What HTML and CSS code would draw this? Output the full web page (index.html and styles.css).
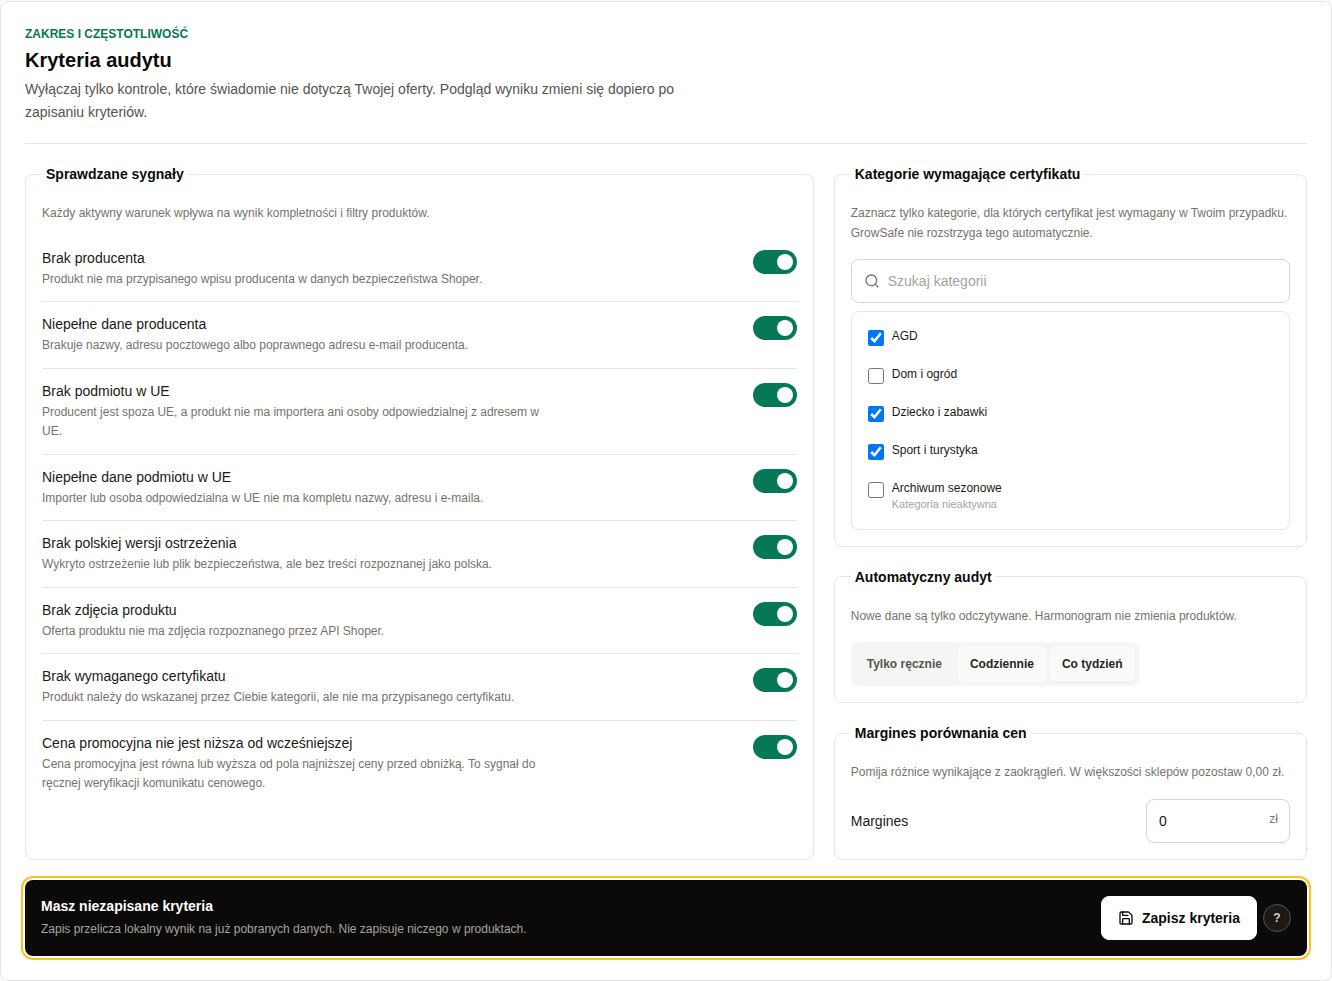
FILE: index.html
```html
<!DOCTYPE html>
<html lang="pl">
    <head>
        <meta charset="utf-8">
        <title>Kryteria audytu</title>
        <link rel="stylesheet" href="styles.css">
    </head>
    <body>
        <form class="card">
            <header class="card_header">
                <p class="eyebrow">ZAKRES I CZĘSTOTLIWOŚĆ</p>
                <h2>Kryteria audytu</h2>
                <p class="lead">Wyłączaj tylko kontrole, które świadomie nie dotyczą Twojej oferty. Podgląd wyniku zmieni się dopiero po zapisaniu kryteriów.</p>
            </header>

            <div class="columns">
                <fieldset class="signals">
                    <legend>Sprawdzane sygnały</legend>
                    <p class="hint">Każdy aktywny warunek wpływa na wynik kompletności i filtry produktów.</p>
                    <div class="signal_list">
                        <label class="signal">
                            <span class="signal_text">
                                <span class="signal_name">Brak producenta</span>
                                <span class="signal_desc">Produkt nie ma przypisanego wpisu producenta w danych bezpieczeństwa Shoper.</span>
                            </span>
                            <input type="checkbox" class="switch" checked>
                        </label>
                        <label class="signal">
                            <span class="signal_text">
                                <span class="signal_name">Niepełne dane producenta</span>
                                <span class="signal_desc">Brakuje nazwy, adresu pocztowego albo poprawnego adresu e-mail producenta.</span>
                            </span>
                            <input type="checkbox" class="switch" checked>
                        </label>
                        <label class="signal">
                            <span class="signal_text">
                                <span class="signal_name">Brak podmiotu w UE</span>
                                <span class="signal_desc">Producent jest spoza UE, a produkt nie ma importera ani osoby odpowiedzialnej z adresem w UE.</span>
                            </span>
                            <input type="checkbox" class="switch" checked>
                        </label>
                        <label class="signal">
                            <span class="signal_text">
                                <span class="signal_name">Niepełne dane podmiotu w UE</span>
                                <span class="signal_desc">Importer lub osoba odpowiedzialna w UE nie ma kompletu nazwy, adresu i e-maila.</span>
                            </span>
                            <input type="checkbox" class="switch" checked>
                        </label>
                        <label class="signal">
                            <span class="signal_text">
                                <span class="signal_name">Brak polskiej wersji ostrzeżenia</span>
                                <span class="signal_desc">Wykryto ostrzeżenie lub plik bezpieczeństwa, ale bez treści rozpoznanej jako polska.</span>
                            </span>
                            <input type="checkbox" class="switch" checked>
                        </label>
                        <label class="signal">
                            <span class="signal_text">
                                <span class="signal_name">Brak zdjęcia produktu</span>
                                <span class="signal_desc">Oferta produktu nie ma zdjęcia rozpoznanego przez API Shoper.</span>
                            </span>
                            <input type="checkbox" class="switch" checked>
                        </label>
                        <label class="signal">
                            <span class="signal_text">
                                <span class="signal_name">Brak wymaganego certyfikatu</span>
                                <span class="signal_desc">Produkt należy do wskazanej przez Ciebie kategorii, ale nie ma przypisanego certyfikatu.</span>
                            </span>
                            <input type="checkbox" class="switch" checked>
                        </label>
                        <label class="signal">
                            <span class="signal_text">
                                <span class="signal_name">Cena promocyjna nie jest niższa od wcześniejszej</span>
                                <span class="signal_desc">Cena promocyjna jest równa lub wyższa od pola najniższej ceny przed obniżką. To sygnał do ręcznej weryfikacji komunikatu cenowego.</span>
                            </span>
                            <input type="checkbox" class="switch" checked>
                        </label>
                    </div>
                </fieldset>

                <div class="side">
                    <fieldset>
                        <legend>Kategorie wymagające certyfikatu</legend>
                        <p class="hint">Zaznacz tylko kategorie, dla których certyfikat jest wymagany w Twoim przypadku. GrowSafe nie rozstrzyga tego automatycznie.</p>
                        <div class="search">
                            <svg width="16" height="16" viewBox="0 0 24 24" fill="none" stroke="currentColor" stroke-width="2" stroke-linecap="round" stroke-linejoin="round">
                                <circle cx="11" cy="11" r="8"/>
                                <path d="m21 21-4.34-4.34"/>
                            </svg>
                            <input type="text" placeholder="Szukaj kategorii">
                        </div>
                        <div class="category_list">
                            <label class="category">
                                <input type="checkbox" checked>
                                <span>AGD</span>
                            </label>
                            <label class="category">
                                <input type="checkbox">
                                <span>Dom i ogród</span>
                            </label>
                            <label class="category">
                                <input type="checkbox" checked>
                                <span>Dziecko i zabawki</span>
                            </label>
                            <label class="category">
                                <input type="checkbox" checked>
                                <span>Sport i turystyka</span>
                            </label>
                            <label class="category">
                                <input type="checkbox">
                                <span>Archiwum sezonowe<small>Kategoria nieaktywna</small></span>
                            </label>
                        </div>
                    </fieldset>

                    <fieldset>
                        <legend>Automatyczny audyt</legend>
                        <p class="hint">Nowe dane są tylko odczytywane. Harmonogram nie zmienia produktów.</p>
                        <div class="segments">
                            <button type="button">Tylko ręcznie</button>
                            <button type="button" class="hovered">Codziennie</button>
                            <button type="button" class="active">Co tydzień</button>
                        </div>
                    </fieldset>

                    <fieldset>
                        <legend>Margines porównania cen</legend>
                        <p class="hint">Pomija różnice wynikające z zaokrągleń. W większości sklepów pozostaw 0,00 zł.</p>
                        <label class="margin_row">
                            <span>Margines</span>
                            <span class="amount">
                                <input type="text" value="0">
                                <span class="unit">zł</span>
                            </span>
                        </label>
                    </fieldset>
                </div>
            </div>

            <div class="save_bar">
                <div class="save_text">
                    <strong>Masz niezapisane kryteria</strong>
                    <p>Zapis przelicza lokalny wynik na już pobranych danych. Nie zapisuje niczego w produktach.</p>
                </div>
                <div class="save_actions">
                    <button type="button" class="save_button">
                        <svg width="16" height="16" viewBox="0 0 24 24" fill="none" stroke="currentColor" stroke-width="2" stroke-linecap="round" stroke-linejoin="round">
                            <path d="M15.2 3a2 2 0 0 1 1.4.6l3.8 3.8a2 2 0 0 1 .6 1.4V19a2 2 0 0 1-2 2H5a2 2 0 0 1-2-2V5a2 2 0 0 1 2-2z"/>
                            <path d="M17 21v-7a1 1 0 0 0-1-1H8a1 1 0 0 0-1 1v7"/>
                            <path d="M7 3v4a1 1 0 0 0 1 1h7"/>
                        </svg>
                        Zapisz kryteria
                    </button>
                    <button type="button" class="help_button">?</button>
                </div>
            </div>
        </form>
    </body>
</html>
```
FILE: styles.css
```css
* {
    box-sizing: border-box;
    margin: 0;
    padding: 0;
}

body {
    padding-top: 0.75px;
    background-color: #fafaf9;
    color: #1c1917;
    font-family: "Liberation Sans", Arial, sans-serif;
    font-size: 14px;
    line-height: 20px;
}

button,
input {
    font: inherit;
    color: inherit;
}

.card {
    border: 1px solid #e5e5e5;
    border-radius: 8px;
    background-color: #fff;
    padding: 24px;
}

.card_header {
    border-bottom: 1px solid #e5e5e5;
    padding-bottom: 20px;
    margin-bottom: 20px;
}

.eyebrow {
    color: #047857;
    font-size: 12px;
    font-weight: bold;
    line-height: 16px;
}

.card_header h2 {
    margin: 4px 0;
    color: #0c0a09;
    font-size: 20px;
    line-height: 28px;
}

.lead {
    max-width: 672px;
    color: #57534e;
    line-height: 22.75px;
}

.columns {
    display: grid;
    grid-template-columns: minmax(0, 5fr) minmax(0, 3fr);
    gap: 20px;
}

.side {
    display: flex;
    flex-direction: column;
    gap: 20px;
}

fieldset {
    min-width: 0;
    border: 1px solid #e5e5e5;
    border-radius: 8px;
    padding: 16px;
}

legend {
    padding: 0 4px;
    color: #0c0a09;
    font-weight: bold;
}

.hint {
    margin-top: 4px;
    color: #78716c;
    font-size: 12px;
    line-height: 19.5px;
}

/* signals */
.signal_list {
    margin-top: 12px;
}

.signal {
    display: flex;
    justify-content: space-between;
    align-items: flex-start;
    gap: 16px;
    padding: 12px 0;
    border-bottom: 1px solid #e5e5e5;
}

.signal:last-child {
    border-bottom: 0;
}

.signal_name {
    display: block;
}

.signal_desc {
    display: block;
    max-width: 512px;
    margin-top: 2px;
    color: #78716c;
    font-size: 12px;
    line-height: 19.5px;
}

.switch {
    appearance: none;
    flex-shrink: 0;
    display: flex;
    justify-content: flex-end;
    width: 44px;
    height: 24px;
    margin-top: 2px;
    padding: 4px;
    border-radius: 12px;
    background-color: #047857;
}

.switch::before {
    content: "";
    width: 16px;
    height: 16px;
    border-radius: 50%;
    background-color: #fff;
}

/* categories */
.search {
    display: flex;
    align-items: center;
    gap: 8px;
    height: 44px;
    margin-top: 16px;
    padding: 0 12px;
    border: 1px solid #d4d4d4;
    border-radius: 8px;
    color: #78716c;
}

.search input {
    flex: 1;
    min-width: 0;
    border: 0;
    outline: 0;
    background: none;
}

.search input::placeholder {
    color: #a8a29e;
}

.category_list {
    display: flex;
    flex-direction: column;
    gap: 4px;
    margin-top: 8px;
    padding: 8px;
    border: 1px solid #e5e5e5;
    border-radius: 8px;
}

.category {
    display: flex;
    align-items: flex-start;
    gap: 8px;
    padding: 8px;
    font-size: 12px;
    line-height: 16px;
}

.category input {
    width: 16px;
    height: 16px;
    margin-top: 2px;
}

.category small {
    display: block;
    color: #a8a29e;
    font-size: 11px;
    line-height: 16.5px;
}

/* schedule */
.segments {
    display: inline-flex;
    gap: 4px;
    margin-top: 16px;
    padding: 4px;
    border-radius: 8px;
    background-color: #f5f5f4;
    vertical-align: top;
}

.segments button {
    height: 36px;
    padding: 0 12px;
    border: 0;
    border-radius: 6px;
    background: none;
    color: #57534e;
    font-size: 12px;
    font-weight: bold;
}

.segments .hovered {
    background-color: #fafaf9;
    color: #292524;
}

.segments .active {
    background-color: #fafaf9;
    color: #292524;
    box-shadow: 0 1px 2px rgba(0, 0, 0, 0.06);
}

/* price margin */
.margin_row {
    display: flex;
    justify-content: space-between;
    align-items: center;
    margin-top: 16px;
}

.amount {
    position: relative;
    width: 144px;
}

.amount input {
    display: block;
    width: 100%;
    height: 44px;
    padding: 0 36px 0 12px;
    border: 1px solid #d4d4d4;
    border-radius: 8px;
}

.unit {
    position: absolute;
    top: 12px;
    right: 12px;
    color: #78716c;
    font-size: 12px;
    line-height: 16px;
}

/* save bar */
.save_bar {
    display: flex;
    justify-content: space-between;
    align-items: center;
    margin-top: 20px;
    padding: 16px;
    border-radius: 8px;
    background-color: #0c0a09;
    color: #fff;
    box-shadow: 0 0 0 2px #fff, 0 0 0 4px #fbbf24;
}

.save_text strong {
    display: block;
}

.save_text p {
    margin-top: 4px;
    color: #a8a29e;
    font-size: 12px;
    line-height: 19.5px;
}

.save_actions {
    display: flex;
    align-items: center;
    gap: 6px;
}

.save_button {
    display: flex;
    align-items: center;
    gap: 8px;
    height: 44px;
    padding: 0 16px;
    border: 1px solid #fff;
    border-radius: 8px;
    background-color: #fff;
    color: #0c0a09;
    font-weight: bold;
}

.help_button {
    width: 28px;
    height: 28px;
    border: 1px solid #57534e;
    border-radius: 50%;
    background-color: #1c1917;
    color: #d6d3d1;
    font-size: 12px;
    font-weight: bold;
}
```
